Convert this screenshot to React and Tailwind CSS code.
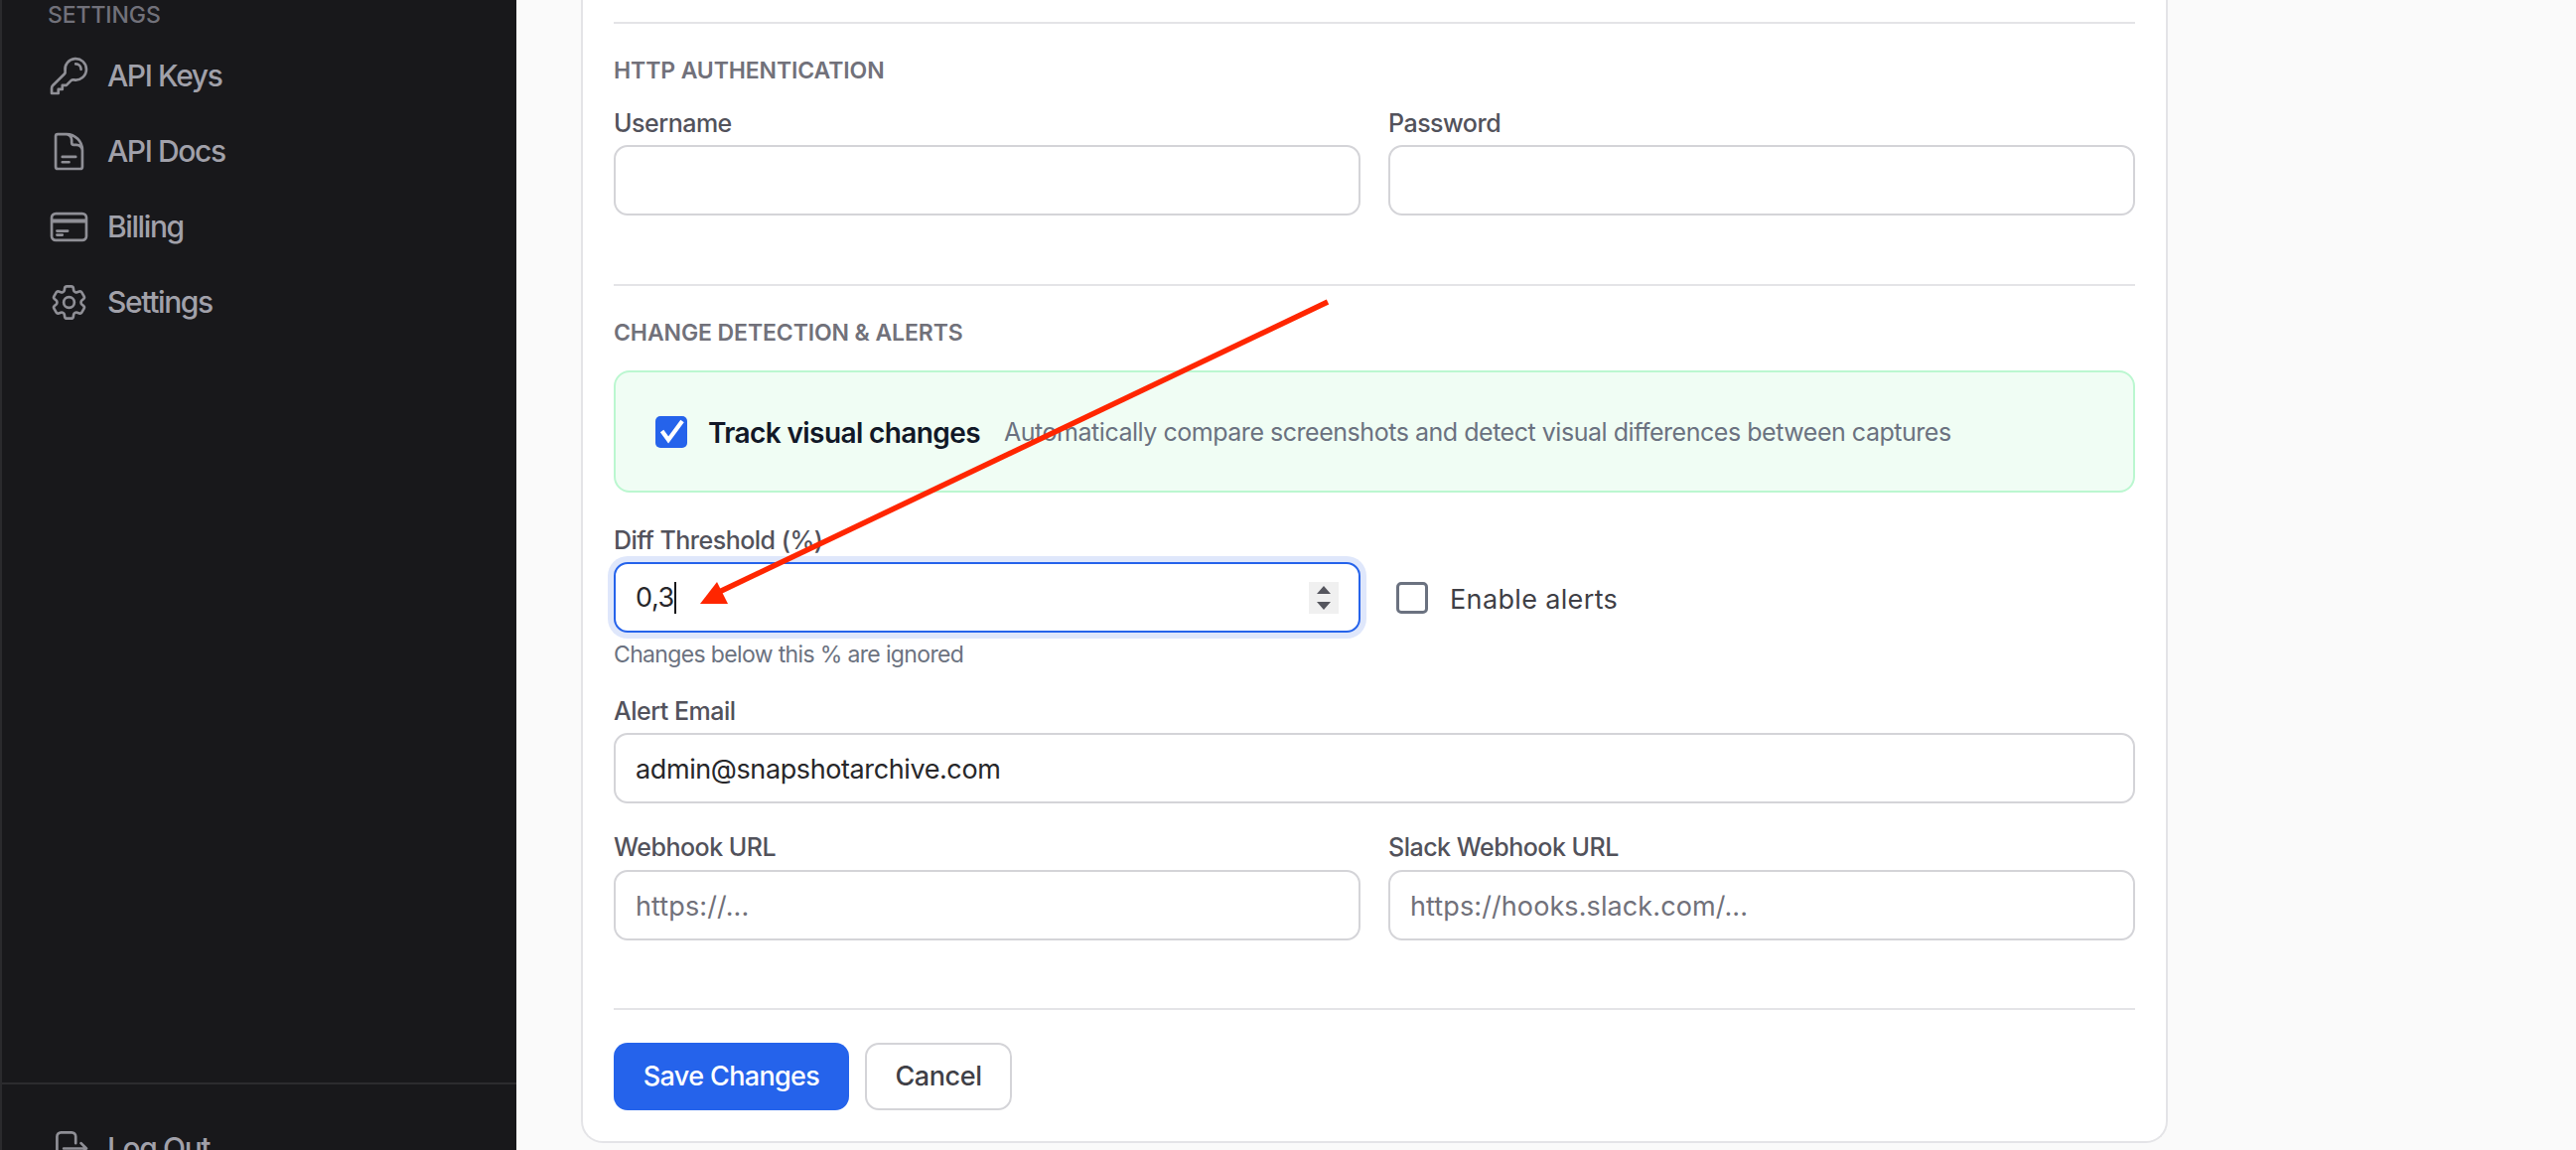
import React from "react";
import {
  HiOutlineKey,
  HiOutlineDocumentText,
  HiOutlineCreditCard,
  HiOutlineCog6Tooth,
  HiOutlineArrowRightOnRectangle,
} from "react-icons/hi2";

const NAV_ITEMS = [
  { label: "API Keys", icon: HiOutlineKey },
  { label: "API Docs", icon: HiOutlineDocumentText },
  { label: "Billing", icon: HiOutlineCreditCard },
  { label: "Settings", icon: HiOutlineCog6Tooth },
];

function NavItem({ label, icon: Icon }) {
  return (
    <a className="flex h-[76px] items-center gap-[17px] pl-[46px] text-[30px] font-medium tracking-[-1.4px] text-[#a1a1aa]">
      <Icon className="h-[43px] w-[43px] shrink-0 text-[#8f8f96]" />
      <span>{label}</span>
    </a>
  );
}

function Sidebar() {
  return (
    <aside className="h-[1158px] w-[520px] shrink-0 overflow-hidden border-l-2 border-[#2a2a2d] bg-[#18181b]">
      <div className="h-[1090px]">
        <p className="h-[30px] pl-[46px] text-[23px] leading-[30px] font-medium tracking-[-0.1px] text-[#71717a]">
          SETTINGS
        </p>
        <nav className="mt-[8px]">
          {NAV_ITEMS.map((item) => (
            <NavItem key={item.label} {...item} />
          ))}
        </nav>
      </div>
      <div className="border-t-2 border-[#2c2c2f] pt-[26px]">
        <NavItem label="Log Out" icon={HiOutlineArrowRightOnRectangle} />
      </div>
    </aside>
  );
}

function Divider({ className = "" }) {
  return <div className={`h-[2px] bg-[#e4e4e7] ${className}`} />;
}

function SectionTitle({ children, className = "" }) {
  return (
    <h3 className={`h-[30px] text-[23px] leading-[30px] font-semibold tracking-[-0.1px] text-[#71717a] ${className}`}>
      {children}
    </h3>
  );
}

function Label({ children, className = "" }) {
  return (
    <label className={`block h-[30px] text-[25px] leading-[30px] font-medium tracking-[-0.5px] text-[#52525b] ${className}`}>
      {children}
    </label>
  );
}

function TextInput({ value, placeholder, className = "" }) {
  return (
    <input
      readOnly
      value={value ?? ""}
      placeholder={placeholder}
      className={`block h-[71px] w-full rounded-[14px] border-2 border-[#d4d4d8] bg-white px-[20px] pt-[2px] text-[27px] tracking-[-0.4px] text-[#27272a] outline-none placeholder:tracking-[0.1px] placeholder:text-[#71717a] ${className}`}
    />
  );
}

function ThresholdInput() {
  return (
    <div className="flex h-[71px] items-center rounded-[14px] border-2 border-[#2563eb] bg-white pr-[20px] pl-[20px] shadow-[0_0_0_6px_#dfe7fb]">
      <span className="mt-[2px] text-[27px] tracking-[-0.4px] text-[#27272a]">0,3</span>
      <span className="h-[32px] w-[2px] bg-[#18181b]" />
      <span className="ml-auto flex h-[32px] w-[30px] flex-col items-center justify-center gap-[8px] bg-[#f0f0f0]">
        <span className="h-0 w-0 border-x-[7px] border-b-[8px] border-x-transparent border-b-[#55565e]" />
        <span className="h-0 w-0 border-x-[7px] border-t-[8px] border-x-transparent border-t-[#55565e]" />
      </span>
    </div>
  );
}

function Card() {
  return (
    <section className="w-[1598px] rounded-b-[22px] border-x-2 border-b-2 border-[#e4e4e7] bg-white px-[31px] pt-[22px] pb-[31px]">
      <Divider />
      <SectionTitle className="mt-[32px]">HTTP AUTHENTICATION</SectionTitle>
      <div className="mt-[23px] grid grid-cols-2 gap-x-[28px]">
        <div>
          <Label>Username</Label>
          <TextInput className="mt-[7px]" />
        </div>
        <div>
          <Label>Password</Label>
          <TextInput className="mt-[7px]" />
        </div>
      </div>
      <Divider className="mt-[69px]" />
      <SectionTitle className="mt-[32px]">CHANGE DETECTION &amp; ALERTS</SectionTitle>
      <div className="mt-[23px] flex h-[123px] items-center rounded-[16px] border-2 border-[#bbf7d0] bg-[#f0fdf4] pl-[40px]">
        <span className="flex h-[32px] w-[32px] items-center justify-center rounded-[5px] bg-[#2563eb]">
          <svg viewBox="0 0 16 16" className="h-[26px] w-[26px]" fill="none" stroke="white" strokeWidth="2.6">
            <path d="M2.2 7.4 6.2 12.9 14.8 1.2" />
          </svg>
        </span>
        <span className="mt-[2px] ml-[21px] text-[28px] font-semibold tracking-[-0.6px] text-[#111827]">Track visual changes</span>
        <span className="mt-[2px] ml-[24px] text-[25px] tracking-[-0.47px] text-[#6b7280]">
          Automatically compare screenshots and detect visual differences between captures
        </span>
      </div>
      <div className="mt-[33px] grid grid-cols-2 gap-x-[28px]">
        <div>
          <Label>Diff Threshold (%)</Label>
          <div className="mt-[7px]">
            <ThresholdInput />
          </div>
          <p className="mt-[7px] h-[30px] text-[23px] leading-[30px] tracking-[-0.65px] text-[#6b7280]">
            Changes below this % are ignored
          </p>
        </div>
        <div className="flex h-[108px] items-end pb-[19px] pl-[8px]">
          <span className="h-[32px] w-[32px] rounded-[5px] border-[3px] border-[#6b7280] bg-white" />
          <span className="ml-[22px] translate-y-[2px] text-[27px] leading-[32px] tracking-[0.35px] text-[#3f3f46]">Enable alerts</span>
        </div>
      </div>
      <Label className="mt-[27px]">Alert Email</Label>
      <TextInput className="mt-[7px] h-[71px]" value="admin@snapshotarchive.com" />
      <div className="mt-[29px] grid grid-cols-2 gap-x-[28px]">
        <div>
          <Label>Webhook URL</Label>
          <TextInput className="mt-[8px] h-[70px]" placeholder="https://..." />
        </div>
        <div>
          <Label>Slack Webhook URL</Label>
          <TextInput className="mt-[8px] h-[70px]" placeholder="https://hooks.slack.com/..." />
        </div>
      </div>
      <Divider className="mt-[68px]" />
      <div className="mt-[33px] flex gap-[16px]">
        <button type="button" className="h-[68px] w-[237px] rounded-[14px] bg-[#2563eb] text-[27px] font-medium tracking-[-0.65px] text-white">
          Save Changes
        </button>
        <button type="button" className="h-[68px] w-[148px] rounded-[14px] border-2 border-[#d4d4d8] bg-white text-[27px] font-medium tracking-[-0.4px] text-[#3f3f46]">
          Cancel
        </button>
      </div>
    </section>
  );
}

export default function App() {
  return (
    <div className="relative flex h-[1158px] w-full overflow-hidden bg-[#fafafa] font-['Inter',sans-serif]">
      <Sidebar />
      <main className="flex-1 pl-[65px]">
        <Card />
      </main>
      {/* annotation arrow drawn over the form */}
      <svg className="pointer-events-none absolute top-0 left-0 h-[1158px] w-[2594px]" viewBox="0 0 2594 1158">
        <line x1="1337" y1="304" x2="720" y2="598" stroke="#ff2600" strokeWidth="5.5" />
        <polygon points="705,608 722,586 733,608" fill="#ff2600" />
      </svg>
    </div>
  );
}
